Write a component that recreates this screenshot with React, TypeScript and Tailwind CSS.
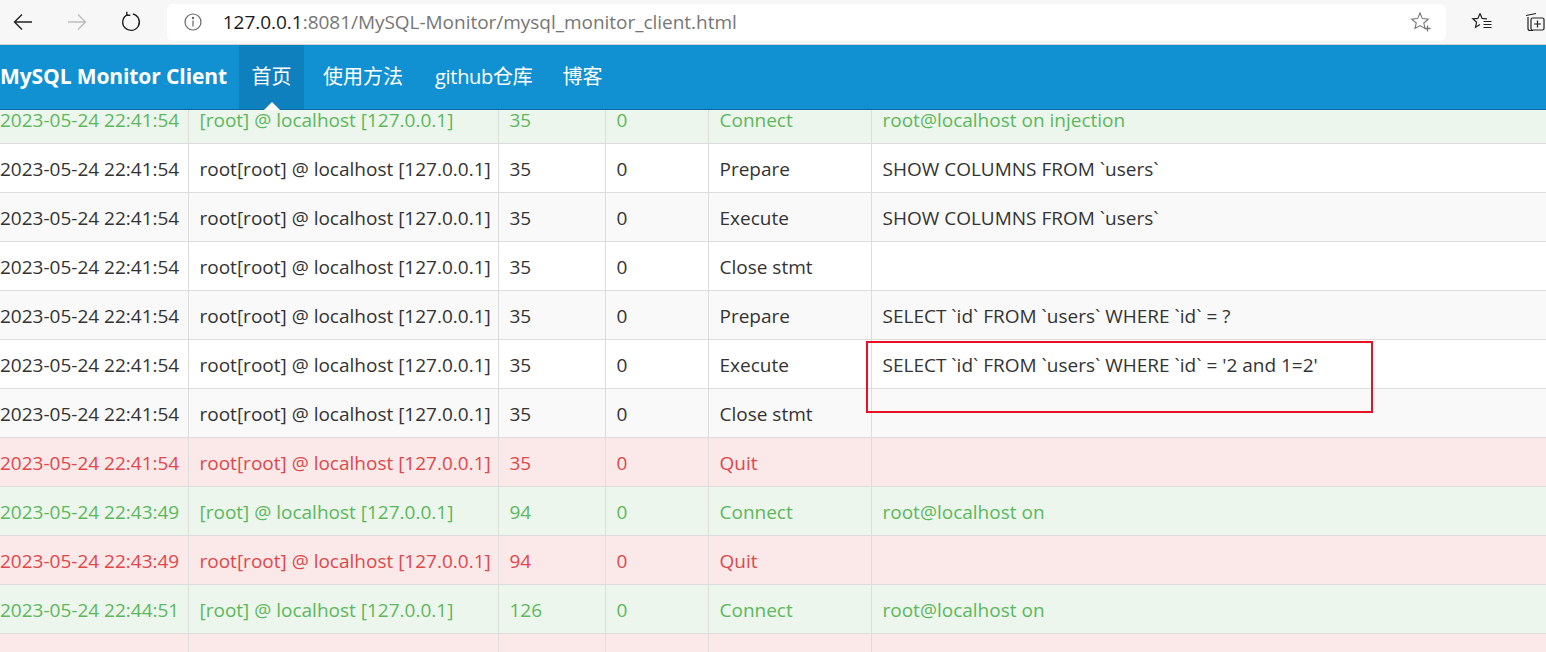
import React from "react";

type Kind = "success" | "danger" | "white" | "stripe";
type Row = { t: string; u: string; id: string; s: string; cmd: string; arg: string; k: Kind };

const rootU = "root[root] @ localhost [127.0.0.1]";
const conU = "[root] @ localhost [127.0.0.1]";
const T1 = "2023-05-24 22:41:54";

const rows: Row[] = [
  { t: T1, u: conU, id: "35", s: "0", cmd: "Connect", arg: "root@localhost on injection", k: "success" },
  { t: T1, u: rootU, id: "35", s: "0", cmd: "Prepare", arg: "SHOW COLUMNS FROM `users`", k: "white" },
  { t: T1, u: rootU, id: "35", s: "0", cmd: "Execute", arg: "SHOW COLUMNS FROM `users`", k: "stripe" },
  { t: T1, u: rootU, id: "35", s: "0", cmd: "Close stmt", arg: "", k: "white" },
  { t: T1, u: rootU, id: "35", s: "0", cmd: "Prepare", arg: "SELECT `id` FROM `users` WHERE `id` = ?", k: "stripe" },
  { t: T1, u: rootU, id: "35", s: "0", cmd: "Execute", arg: "SELECT `id` FROM `users` WHERE `id` = '2 and 1=2'", k: "white" },
  { t: T1, u: rootU, id: "35", s: "0", cmd: "Close stmt", arg: "", k: "stripe" },
  { t: T1, u: rootU, id: "35", s: "0", cmd: "Quit", arg: "", k: "danger" },
  { t: "2023-05-24 22:43:49", u: conU, id: "94", s: "0", cmd: "Connect", arg: "root@localhost on", k: "success" },
  { t: "2023-05-24 22:43:49", u: rootU, id: "94", s: "0", cmd: "Quit", arg: "", k: "danger" },
  { t: "2023-05-24 22:44:51", u: conU, id: "126", s: "0", cmd: "Connect", arg: "root@localhost on", k: "success" },
  { t: "2023-05-24 22:44:51", u: rootU, id: "126", s: "0", cmd: "Quit", arg: "", k: "danger" },
];

const rowCls: Record<Kind, string> = {
  success: "bg-[#ecf6ec] text-[#5cb85c]",
  danger: "bg-[#fbe9e9] text-[#e0474a]",
  white: "bg-white text-[#333333]",
  stripe: "bg-[#f9f9f9] text-[#333333]",
};

const td = "h-[49px] border-t border-[#dddddd] px-[11px] pt-[3px] align-middle whitespace-nowrap";

function Back() {
  return (
    <svg width="22" height="22" viewBox="0 0 22 22" fill="none" stroke="#222" strokeWidth="1.4">
      <path d="M20 11H3M10 3.5L2.5 11L10 18.5" />
    </svg>
  );
}
function Fwd() {
  return (
    <svg width="22" height="22" viewBox="0 0 22 22" fill="none" stroke="#bdbdbd" strokeWidth="1.4">
      <path d="M2 11H19M12 3.5L19.5 11L12 18.5" />
    </svg>
  );
}
function Refresh() {
  return (
    <svg width="22" height="22" viewBox="0 0 22 22" fill="none" stroke="#222" strokeWidth="1.4">
      <path d="M7.5 3.6A8.3 8.3 0 1 0 12.8 3" />
      <path d="M6.8 0.8V4.2H10.3" />
    </svg>
  );
}
function Info() {
  return (
    <svg width="18" height="18" viewBox="0 0 18 18" fill="none" stroke="#666" strokeWidth="1.2">
      <circle cx="9" cy="9" r="8" />
      <path d="M9 7.5V13.5" />
      <circle cx="9" cy="5" r="0.6" fill="#666" />
    </svg>
  );
}
function StarPlus() {
  return (
    <svg width="22" height="22" viewBox="0 0 22 22" fill="none" stroke="#777" strokeWidth="1.1">
      <path d="M10 2L12.4 7.6L18.3 8.1L13.8 12L15 17.5L10 14.6L5 17.5L6.3 12L1.7 8.1L7.6 7.6Z" />
      <path d="M17.5 14.5V20.5M14.5 17.5H20.5" stroke="#777" strokeWidth="1.3" />
    </svg>
  );
}
function Favs() {
  return (
    <svg width="22" height="22" viewBox="0 0 22 22" fill="none" stroke="#222" strokeWidth="1.2">
      <path d="M9 2.5L11.1 7.4L16 7.8" />
      <path d="M9 2.5L6.9 7.4L1.8 7.8L5.6 11.2L4.5 16.3L9 13.6" />
      <path d="M12.5 10.5H20.5M12.5 13.5H20.5M12.5 16.5H20.5" />
    </svg>
  );
}
function Collections() {
  return (
    <svg width="22" height="22" viewBox="0 0 22 22" fill="none" stroke="#222" strokeWidth="1.2">
      <path d="M4 6V17.5A2 2 0 0 0 6 19.5H9" />
      <path d="M2 4.5L12 2.5" />
      <rect x="7" y="7" width="13" height="12" rx="1.5" />
      <path d="M13.5 9.5V16.5M10 13H17" />
    </svg>
  );
}

export default function App() {
  return (
    <div className="relative h-[652px] w-[1546px] overflow-hidden bg-white font-['Open_Sans','Noto_Sans_CJK_SC',sans-serif]">
      {/* browser chrome */}
      <div className="flex h-[45px] items-center border-b border-[#d4d4d4] bg-[#f7f7f7]">
        <div className="flex w-[44px] justify-center pl-[2px]"><Back /></div>
        <div className="flex w-[66px] justify-center"><Fwd /></div>
        <div className="flex w-[42px] justify-center"><Refresh /></div>
        <div className="ml-[15px] flex h-[37px] w-[1281px] items-center rounded-[6px] bg-white">
          <div className="ml-[17px] flex"><Info /></div>
          <div className="ml-[21px] text-[19px] tracking-[-0.03px] text-[#767676]">
            <span className="text-[#1a1a1a]">127.0.0.1</span>:8081/MySQL-Monitor/mysql_monitor_client.html
          </div>
          <div className="ml-auto mr-[14px] flex"><StarPlus /></div>
        </div>
        <div className="ml-[25px] flex"><Favs /></div>
        <div className="ml-[31px] flex"><Collections /></div>
      </div>

      {/* nav */}
      <div className="flex h-[65px] items-stretch border-b border-[#0b6a9e] bg-[#1191d1] text-white">
        <div className="flex w-[239px] items-center text-[21px] font-bold tracking-[-0.1px]">MySQL Monitor Client</div>
        <div className="relative flex w-[65px] items-center justify-center bg-[#0e80bd] text-[20px]">
          首页
          <span className="absolute bottom-[-1px] left-1/2 h-0 w-0 -translate-x-1/2 border-x-[8px] border-b-[8px] border-x-transparent border-b-white" />
        </div>
        <div className="flex items-center pl-[19px] text-[20px]">使用方法</div>
        <div className="flex items-center pl-[32px] text-[20px] tracking-[-0.3px]">github仓库</div>
        <div className="flex items-center pl-[30px] text-[20px]">博客</div>
      </div>

      {/* table */}
      <div className="overflow-hidden">
        <table className="-mt-[16px] w-full table-fixed border-collapse text-[19px]">
          <colgroup>
            <col className="w-[188px]" />
            <col className="w-[310px]" />
            <col className="w-[107px]" />
            <col className="w-[103px]" />
            <col className="w-[163px]" />
            <col />
          </colgroup>
          <tbody>
            {rows.map((r, i) => (
              <tr key={i} className={rowCls[r.k]}>
                <td className={`${td} !pl-0`}>{r.t}</td>
                <td className={`${td} border-l`}>{r.u}</td>
                <td className={`${td} border-l`}>{r.id}</td>
                <td className={`${td} border-l`}>{r.s}</td>
                <td className={`${td} border-l`}>{r.cmd}</td>
                <td className={`${td} border-l`}>{r.arg}</td>
              </tr>
            ))}
          </tbody>
        </table>
      </div>

      {/* annotation */}
      <div className="absolute left-[866px] top-[341px] h-[72px] w-[507px] border-2 border-[#e81123]" />
    </div>
  );
}
